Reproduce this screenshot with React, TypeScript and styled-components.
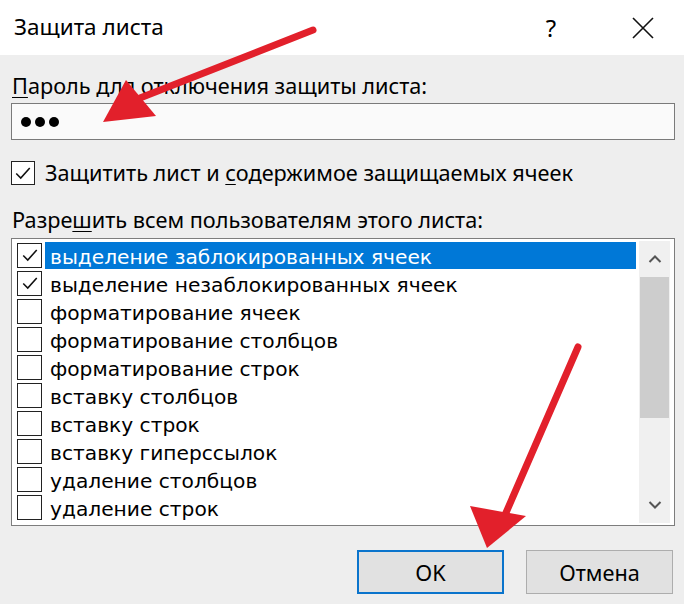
import React from "react";
import styled, { createGlobalStyle } from "styled-components";

const Global = createGlobalStyle`
  html, body { margin: 0; padding: 0; }
  body { width: 684px; height: 604px; overflow: hidden; background: #f0f0f0; }
`;

const Dialog = styled.div`
  position: relative;
  width: 684px;
  height: 604px;
  display: flex;
  flex-direction: column;
  font-family: "Noto Sans", "Open Sans", sans-serif;
  color: #000;
  background: #eeeeee;
`;

const TitleBar = styled.div`
  height: 55px;
  background: #fff;
  display: flex;
  align-items: center;
  padding: 0 19px 0 14px;
  flex-shrink: 0;
`;

const Title = styled.div`
  flex: 1;
  font-size: 22.5px;
  line-height: 28px;
  margin-top: -1px;
`;

const TitleButton = styled.div<{ $w: number; $mr?: number }>`
  width: ${(p) => p.$w}px;
  margin-right: ${(p) => p.$mr ?? 0}px;
  height: 55px;
  display: flex;
  align-items: center;
  justify-content: center;
  font-size: 24px;
`;

const Body = styled.div`
  flex: 1;
  display: flex;
  flex-direction: column;
  padding: 0 9px 0 11px;
`;

const Label = styled.div<{ $mt: number }>`
  font-size: 21.7px;
  line-height: 28px;
  margin-top: ${(p) => p.$mt}px;
  padding-left: 1px;
  white-space: nowrap;
`;

const U = styled.span`
  text-decoration: underline;
  text-underline-offset: 3px;
  text-decoration-thickness: 1px;
`;

const Input = styled.div`
  margin-top: 3px;
  height: 35px;
  border: 1px solid #7a7a7a;
  background: #fafafa;
  display: flex;
  align-items: center;
  padding-left: 9px;
  gap: 4px;
`;

const Dot = styled.span`
  width: 10px;
  height: 10px;
  border-radius: 50%;
  background: #000;
`;

const CheckRow = styled.div`
  margin-top: 20px;
  display: flex;
  align-items: center;
  gap: 10px;
  height: 25px;
  font-size: 21.7px;
  white-space: nowrap;
`;

const Box = styled.div<{ $size: number }>`
  width: ${(p) => p.$size}px;
  height: ${(p) => p.$size}px;
  box-sizing: border-box;
  border: 1.5px solid #222;
  background: #fff;
  flex-shrink: 0;
  display: flex;
  align-items: center;
  justify-content: center;
`;

const ListBox = styled.div`
  margin-top: 4px;
  height: 288px;
  box-sizing: border-box;
  border: 1px solid #7d7d7d;
  background: #fff;
  display: flex;
  padding: 2px 4px 2px 5px;
`;

const Rows = styled.div`
  flex: 1;
  display: flex;
  flex-direction: column;
`;

const Row = styled.div`
  height: 28px;
  display: flex;
  align-items: center;
  gap: 3px;
`;

const ItemText = styled.div<{ $sel?: boolean }>`
  flex: 1;
  height: 27px;
  box-sizing: border-box;
  padding-top: 3px;
  display: flex;
  align-items: center;
  padding-left: 5px;
  margin-right: 3px;
  font-family: "DejaVu Sans", sans-serif;
  font-size: 20.2px;
  white-space: nowrap;
  background: ${(p) => (p.$sel ? "#0078d7" : "transparent")};
  color: ${(p) => (p.$sel ? "#fff" : "#000")};
`;

const Scrollbar = styled.div`
  width: 31px;
  display: flex;
  flex-direction: column;
  background: #f0f0f0;
`;

const ScrollArrow = styled.div`
  height: 36px;
  display: flex;
  align-items: center;
  justify-content: center;
`;

const Track = styled.div`
  flex: 1;
  display: flex;
  flex-direction: column;
`;

const Thumb = styled.div`
  height: 141px;
  margin: 0 1px;
  background: #cdcdcd;
`;

const Buttons = styled.div`
  margin-top: 24px;
  display: flex;
  justify-content: flex-end;
  gap: 22px;
  padding-right: 2px;
`;

const Button = styled.div<{ $primary?: boolean }>`
  width: 147px;
  height: 44px;
  box-sizing: border-box;
  background: #e1e1e1;
  border: ${(p) => (p.$primary ? "2.5px solid #0a74cc" : "1px solid #adadad")};
  display: flex;
  align-items: center;
  justify-content: center;
  font-size: 21.7px;
`;

const Overlay = styled.svg`
  position: absolute;
  left: 0;
  top: 0;
  pointer-events: none;
`;

const Check = ({ size = 16 }: { size?: number }) => (
  <svg width={size} height={size} viewBox="0 0 16 16">
    <path d="M2 8.5 L6 12.5 L14 3.5" fill="none" stroke="#111" strokeWidth="1.4" />
  </svg>
);

const items: { text: string; checked: boolean }[] = [
  { text: "выделение заблокированных ячеек", checked: true },
  { text: "выделение незаблокированных ячеек", checked: true },
  { text: "форматирование ячеек", checked: false },
  { text: "форматирование столбцов", checked: false },
  { text: "форматирование строк", checked: false },
  { text: "вставку столбцов", checked: false },
  { text: "вставку строк", checked: false },
  { text: "вставку гиперссылок", checked: false },
  { text: "удаление столбцов", checked: false },
  { text: "удаление строк", checked: false },
];

export default function App() {
  return (
    <Dialog>
      <Global />
      <TitleBar>
        <Title>Защита листа</Title>
        <TitleButton $w={40} $mr={50}>?</TitleButton>
        <TitleButton $w={44}>
          <svg width="22" height="22" viewBox="0 0 22 22">
            <path d="M1 1 L21 21 M21 1 L1 21" stroke="#111" strokeWidth="1.6" />
          </svg>
        </TitleButton>
      </TitleBar>
      <Body>
        <Label $mt={17}>
          <U>П</U>ароль для отключения защиты листа:
        </Label>
        <Input>
          <Dot />
          <Dot />
          <Dot />
        </Input>
        <CheckRow>
          <Box $size={24}>
            <Check size={18} />
          </Box>
          <span>
            Защитить лист и <U>с</U>одержимое защищаемых ячеек
          </span>
        </CheckRow>
        <Label $mt={21}>
          Разре<U>ш</U>ить всем пользователям этого листа:
        </Label>
        <ListBox>
          <Rows>
            {items.map((it, i) => (
              <Row key={i}>
                <Box $size={25}>{it.checked && <Check size={18} />}</Box>
                <ItemText $sel={i === 0}>{it.text}</ItemText>
              </Row>
            ))}
          </Rows>
          <Scrollbar>
            <ScrollArrow>
              <svg width="14" height="10" viewBox="0 0 14 10">
                <path d="M1.5 8 L7 2.5 L12.5 8" fill="none" stroke="#555" strokeWidth="2" />
              </svg>
            </ScrollArrow>
            <Track>
              <Thumb />
            </Track>
            <ScrollArrow>
              <svg width="14" height="10" viewBox="0 0 14 10">
                <path d="M1.5 2 L7 7.5 L12.5 2" fill="none" stroke="#555" strokeWidth="2" />
              </svg>
            </ScrollArrow>
          </Scrollbar>
        </ListBox>
        <Buttons>
          <Button $primary>OK</Button>
          <Button>Отмена</Button>
        </Buttons>
      </Body>
      <Overlay width="684" height="604" viewBox="0 0 684 604">
        <line x1="313" y1="30" x2="140" y2="98" stroke="#e2202b" strokeWidth="7" strokeLinecap="round" />
        <polygon points="103,122 126,80 156,116" fill="#e2202b" />
        <line x1="578" y1="347" x2="505" y2="515" stroke="#e2202b" strokeWidth="7" strokeLinecap="round" />
        <polygon points="487,548 470,506 526,516" fill="#e2202b" />
      </Overlay>
    </Dialog>
  );
}
